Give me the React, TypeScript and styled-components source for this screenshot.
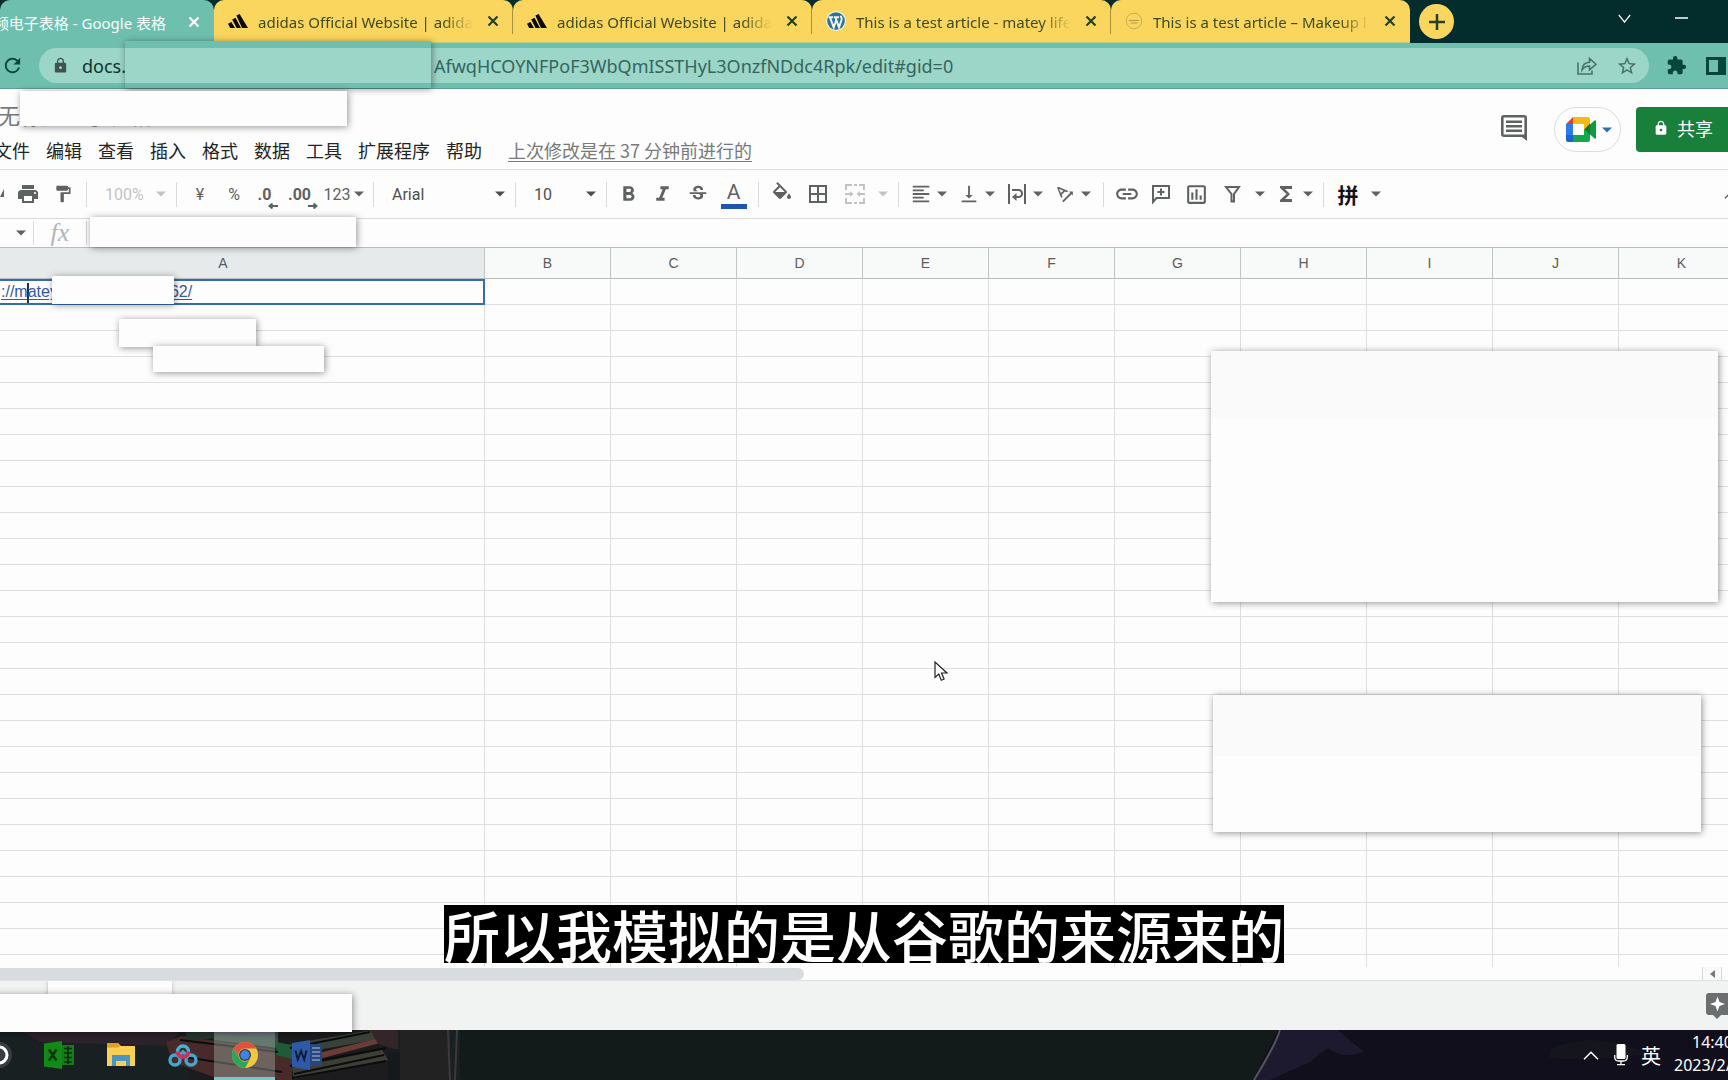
import React from "react";
import styled, { createGlobalStyle, css } from "styled-components";
import {
  MdPrint, MdFormatPaint, MdFormatBold, MdFormatItalic, MdStrikethroughS, MdBorderAll,
  MdFormatAlignLeft, MdVerticalAlignBottom, MdLink, MdRefresh, MdLock, MdExtension,
  MdStarBorder, MdOutlineInsertChart, MdFunctions, MdTextRotationAngleup,
} from "react-icons/md";

const UI = '"Noto Sans", "Noto Sans CJK SC", sans-serif';
const CJK = '"Noto Sans CJK SC", sans-serif';
const ICON = "#5f6262";

const Global = createGlobalStyle`
  * { box-sizing: border-box; }
  html, body, #root { height: 100%; }
  body { margin: 0; overflow: hidden; background: #fdfdfd; font-family: ${UI}; }
  button, select, input { font: inherit; color: inherit; margin: 0; }
`;

const Page = styled.div`
  position: relative;
  display: flex;
  flex-direction: column;
  height: 100vh;
  overflow: hidden;
  > * { flex-shrink: 0; }
`;

const Plain = css`
  display: flex;
  align-items: center;
  justify-content: center;
  padding: 0;
  border: 0;
  background: none;
  flex: none;
`;

const IconButton = styled.button<{ $w?: number }>`
  ${Plain}
  width: ${(p) => p.$w ?? 36}px;
  height: 100%;
`;

/* ---------- browser tabs ---------- */
const TabStrip = styled.div`
  display: flex;
  height: 43px;
  background: #032d2c;
`;
const Tab = styled.div<{ $active?: boolean }>`
  display: flex;
  align-items: center;
  width: ${(p) => (p.$active ? 214 : 299)}px;
  flex: none;
  gap: 10px;
  padding: 0 10px 0 ${(p) => (p.$active ? 0 : 14)}px;
  border-radius: 10px 10px 0 0;
  background: ${(p) => (p.$active ? "#6fbfaf" : "#fad65e")};
  color: ${(p) => (p.$active ? "#f4fffc" : "#3d4a1e")};
  font-size: 15px;
  line-height: 24px;
  border-bottom: ${(p) => (p.$active ? "0" : "1px solid #b9cf84")};
`;
const TabDivider = styled.span`
  width: 1px;
  height: 25px;
  margin-left: -15px;
  margin-right: 4px;
  background: #a8923f;
`;
const TabTitle = styled.span<{ $end?: boolean }>`
  display: flex;
  flex: 1;
  min-width: 0;
  padding-top: 2px;
  justify-content: ${(p) => (p.$end ? "flex-end" : "flex-start")};
  white-space: nowrap;
  overflow: hidden;
  ${(p) => p.$end && css`padding-right: 8px;`}
  ${(p) => !p.$end && css`mask-image: linear-gradient(90deg, #000 86%, transparent);`}
`;
const TabClose = styled.button<{ $light?: boolean }>`
  ${Plain}
  width: 20px;
  height: 20px;
  color: ${(p) => (p.$light ? "#fff" : "#24411f")};
`;
const NewTab = styled.button`
  ${Plain}
  width: 35px;
  height: 35px;
  margin: 4px 0 0 9px;
  border-radius: 50%;
  background: #fad65e;
  color: #24411f;
`;
const WindowControls = styled.div`
  display: flex;
  height: 36px;
  margin-left: auto;
  padding-right: 18px;
  color: #fff;
`;

/* ---------- address bar ---------- */
const AddressBar = styled.div`
  display: flex;
  align-items: center;
  height: 46px;
  background: #6fbfaf;
  border-bottom: 1px solid #5f9e93;
  color: #07463d;
`;
const Omnibox = styled.div`
  display: flex;
  align-items: center;
  flex: 1;
  height: 35px;
  margin-left: 15px;
  padding-right: 2px;
  border-radius: 18px;
  background: #9bd6c8;
  color: #47706a;
`;
const LockSlot = styled.span`
  display: flex;
  justify-content: center;
  width: 43px;
  color: #41524f;
`;
const Host = styled.span`
  width: 352px;
  font-size: 18px;
  line-height: 30px;
  color: #10332e;
`;
const UrlPath = styled.input`
  flex: 1;
  min-width: 0;
  padding: 0;
  border: 0;
  outline: 0;
  background: none;
  && { font-size: 18px; color: #35655c; }
`;

/* ---------- document header ---------- */
const DocHeader = styled.header`
  display: flex;
  justify-content: space-between;
  height: 81px;
  border-bottom: 1px solid #d9dbdb;
  font-family: ${CJK};
`;
const DocTitle = styled.h1`
  margin: 10px 0 3px -2px;
  font-size: 22px;
  line-height: 30px;
  font-weight: 400;
  color: #777a7a;
`;
const MenuBar = styled.nav`
  display: flex;
  align-items: center;
  gap: 16px;
  margin-left: -6px;
  height: 36px;
`;
const MenuItem = styled.button`
  ${Plain}
  && { font-size: 18px; line-height: 26px; color: #222525; }
`;
const LastEdit = styled.a`
  margin-left: 10px;
  font-size: 18px;
  line-height: 26px;
  color: #777a7a;
  text-decoration: underline;
  text-underline-offset: 3px;
`;
const DocActions = styled.div`
  display: flex;
  height: 45px;
  margin-top: 18px;
`;
const CommentButton = styled.button`
  ${Plain}
  width: 32px;
  padding-bottom: 4px;
`;
const MeetButton = styled.button`
  ${Plain}
  gap: 6px;
  width: 67px;
  margin: 0 15px 0 24px;
  padding-left: 2px;
  border: 1px solid #d9dcdf;
  border-radius: 23px;
`;
const MeetCaret = styled.span`
  display: flex;
  color: #2d70b8;
`;
const ShareButton = styled.button`
  ${Plain}
  gap: 8px;
  width: 92px;
  padding: 0 0 3px 17px;
  justify-content: flex-start;
  border-radius: 4px 0 0 4px;
  background: #18803a;
  && { color: #fff; font-size: 18px; }
`;

/* ---------- toolbar ---------- */
const Toolbar = styled.div`
  display: flex;
  align-items: center;
  height: 49px;
  border-bottom: 1px solid #d9dbdb;
  color: ${ICON};
  font-family: Roboto, ${CJK};
  font-size: 16px;
`;
const Tool = styled.button<{ $w?: number; $dim?: boolean }>`
  ${Plain}
  width: ${(p) => p.$w ?? 34}px;
  height: 34px;
  && { color: ${(p) => (p.$dim ? "#c2c4c4" : ICON)}; }
`;
const MenuTool = styled(Tool)<{ $wide?: boolean }>`
  width: ${(p) => (p.$wide ? 55 : 48)}px;
  justify-content: flex-start;
  gap: ${(p) => (p.$wide ? 12 : 5)}px;
  padding-left: ${(p) => (p.$wide ? 7 : 5)}px;
`;
const CollapseTool = styled(Tool)`
  width: 20px;
  margin-right: -14px;
`;
const Divider = styled.span<{ $h?: number }>`
  flex: none;
  width: 1px;
  height: ${(p) => p.$h ?? 25}px;
  margin: 0 6px;
  background: #d9dbdb;
`;
const SelectBox = styled.label<{ $w: number; $dim?: boolean }>`
  display: flex;
  align-items: center;
  flex: none;
  width: ${(p) => p.$w}px;
  padding: 0 4px 0 12px;
  color: ${(p) => (p.$dim ? "#c2c4c4" : "#4c4f4f")};
  select {
    flex: 1;
    min-width: 0;
    appearance: none;
    border: 0;
    padding: 0;
    background: none;
  }
`;
const Decimal = styled.span`
  display: flex;
  flex-direction: column;
  align-items: flex-end;
  padding: 8px 7px 0 0;
  font-weight: 700;
  line-height: 16px;
  svg { margin-right: -7px; }
`;
const InkedLetter = styled.span`
  width: 26px;
  padding-top: 1px;
  border-bottom: 5px solid #1f56ad;
  font-size: 21px;
  line-height: 24px;
`;
const ImeGlyph = styled.b`
  width: 22px;
  font-size: 21px;
  color: #111;
`;
const Spacer = styled.span`
  flex: 1;
`;

/* ---------- formula bar ---------- */
const FormulaBar = styled.div`
  display: flex;
  align-items: center;
  height: 29px;
  border-bottom: 1px solid #b9bdbd;
  color: ${ICON};
`;
const NameBoxTool = styled(Tool)`
  width: 27px;
  padding-left: 14px;
`;
const Fx = styled.label`
  width: 40px;
  text-align: center;
  font: italic 26px/28px "Liberation Serif", serif;
  color: #b4b6b6;
`;
const FormulaInput = styled.input`
  flex: 1;
  height: 26px;
  border: 0;
  outline: 0;
  background: none;
`;

/* ---------- sheet ---------- */
const SheetArea = styled.main`
  flex: 1 1 0;
  min-height: 0;
  overflow: hidden;
  font-family: "Liberation Sans", sans-serif;
`;
const Sheet = styled.table`
  width: 1745px;
  table-layout: fixed;
  border-collapse: separate;
  border-spacing: 0;
`;
const HeadCell = styled.th<{ $on?: boolean }>`
  height: 31px;
  padding: 0 ${(p) => (p.$on ? 38 : 0)}px 0 0;
  border-right: 1px solid #c0c4c4;
  border-bottom: 1px solid #b9bdbd;
  background: ${(p) => (p.$on ? "#e6eaea" : "#f8faf9")};
  font-size: 14px;
  font-weight: 400;
  color: #5a5d5d;
`;
const Cell = styled.td<{ $on?: boolean }>`
  height: 26px;
  padding: 0;
  border-right: 1px solid #dcdfdf;
  border-bottom: 1px solid #dcdfdf;
  ${(p) => p.$on && css`
    border: 2px solid #356cb0;
    border-left: 0;
  `}
`;
const CellLinks = styled.div`
  display: flex;
  gap: 112px;
  align-items: center;
  height: 22px;
  padding-left: 1px;
  font-size: 16px;
  line-height: 22px;
  color: #35599f;
  a { color: inherit; text-underline-offset: 2px; }
`;
const TextCursor = styled.span`
  display: inline-block;
  width: 2px;
  height: 20px;
  margin: 0 -1px;
  vertical-align: middle;
  background: #1c2f55;
`;

/* ---------- bottom of the sheet ---------- */
const ScrollRow = styled.div`
  display: flex;
  justify-content: space-between;
  height: 14px;
  border-bottom: 1px solid #dfe2e2;
`;
const ScrollThumb = styled.div`
  width: 46.5%;
  height: 12px;
  margin-top: 1px;
  border-radius: 0 6px 6px 0;
  background: #d8dcdf;
`;
const ScrollStep = styled.button`
  ${Plain}
  width: 20px;
  margin-right: 6px;
  border: solid #d9dbdb;
  border-width: 0 1px;
  background: #f8f9f9;
`;
const SheetTabs = styled.footer`
  display: flex;
  align-items: flex-start;
  justify-content: space-between;
  height: 49px;
  background: #f1f3f3;
  overflow: hidden;
`;
const SheetTab = styled.button`
  width: 124px;
  height: 49px;
  margin-left: 48px;
  border: 0;
  background: #fdfdfd;
  box-shadow: 0 0 4px rgba(0, 0, 0, 0.25);
`;
const ExploreButton = styled.button`
  ${Plain}
  margin: 12px -6px 0 0;
`;

/* ---------- taskbar ---------- */
const Taskbar = styled.div`
  position: relative;
  display: flex;
  justify-content: space-between;
  height: 50px;
  background: #141a19;
  color: #fff;
`;
const Wallpaper = styled.svg`
  position: absolute;
  inset: 0;
  width: 100%;
  height: 100%;
`;
const Apps = styled.div`
  position: relative;
  display: flex;
  margin-left: -34px;
`;
const AppButton = styled.button<{ $active?: boolean }>`
  ${Plain}
  width: 61px;
  height: 50px;
  margin-right: 1px;
  ${(p) => p.$active && css`
    background: rgba(170, 190, 180, 0.38);
    box-shadow: inset 0 -3px #7cc5cb;
  `}
`;
const Tray = styled.div`
  position: relative;
  display: flex;
  align-items: center;
  gap: 9px;
`;
const Lang = styled.button`
  ${Plain}
  margin-left: 4px;
  && { font-size: 20px; }
`;
const Clock = styled.time`
  width: 54px;
  margin-left: 4px;
  padding-bottom: 2px;
  overflow: hidden;
  font-size: 16px;
  line-height: 23px;
  white-space: nowrap;
  span { display: block; }
  span:first-child { padding-left: 18px; }
`;

/* ---------- things lying over the page ---------- */
const Cover = styled.div<{ $x: number; $y: number; $w: number; $h: number; $tone?: string }>`
  position: absolute;
  left: ${(p) => p.$x}px;
  top: ${(p) => p.$y}px;
  width: ${(p) => p.$w}px;
  height: ${(p) => p.$h}px;
  background: ${(p) => p.$tone ?? "#fdfdfd"};
  box-shadow: 1px 1px 7px rgba(0, 0, 0, 0.42);
`;
const Subtitle = styled.p`
  position: absolute;
  bottom: 117px;
  left: 50%;
  transform: translateX(-50%);
  margin: 0;
  background: #000;
  color: #fff;
  font: 500 56px/58px ${CJK};
  white-space: nowrap;
`;
const Pointer = styled.svg`
  position: absolute;
  left: 934px;
  top: 661px;
`;

/* ---------- drawings ---------- */
const CaretSvg = styled.svg`
  flex: none;
`;
const Caret = () => (
  <CaretSvg width="10" height="6" viewBox="0 0 10 6"><path d="M0 .5h10L5 5.5z" fill="currentColor" /></CaretSvg>
);
const Cross = () => (
  <svg width="12" height="12" viewBox="0 0 12 12"><path d="M1.5 1.5l9 9M10.5 1.5l-9 9" stroke="currentColor" strokeWidth="2.2" /></svg>
);
const Adidas = () => (
  <svg width="20" height="14" viewBox="0 0 20 14"><path d="M8.4 1.6L11.6 0 20 14h-6zM4.2 5.4l3.3-1.7L13 14H8.6zM0 9.8l3.4-1.7L7 14H2.2z" fill="#0a0a05" /></svg>
);
const WordPress = () => (
  <svg width="20" height="20" viewBox="0 0 20 20">
    <circle cx="10" cy="10" r="10" fill="#e9f1ee" /><circle cx="10" cy="10" r="8.8" fill="#2d7597" />
    <path d="M2.6 6.2h4.6M8 6.2h5M4 6.4l3.7 10 2.8-8M9.4 6.4l3.6 10 2.6-7.6c.5-1.8-.6-2.6-1-4" fill="none" stroke="#f4f8f5" strokeWidth="1.9" />
  </svg>
);
const Makeup = () => (
  <svg width="18" height="18" viewBox="0 0 18 18"><circle cx="9" cy="9" r="7.8" fill="none" stroke="#c9b055" /><path d="M4 8.5h10M5.5 11h7" stroke="#b39c48" strokeWidth="1.2" /></svg>
);
const ShareArrow = () => (
  <svg width="20" height="20" viewBox="0 0 20 20" fill="none" stroke="currentColor" strokeWidth="1.5"><path d="M1 6.5V18h14v-3.5M5 14c.3-5 3-7.5 7.5-7.7V2.500L19 8.300l-6.500 5.500V10C9 10 6.800 11.300 5 14z" /></svg>
);
const SidePanel = () => (
  <svg width="20" height="18" viewBox="0 0 20 18"><path d="M0 0h20v18H0zM3 3v12h9V3z" fillRule="evenodd" fill="currentColor" /></svg>
);
const CommentIcon = () => (
  <svg width="26" height="26" viewBox="0 0 26 26"><path d="M3 0h20q3 0 3 3v23l-5-4H3q-3 0-3-3V3q0-3 3-3zm-.4 2.500v17h20.800v-17zM5 5.500h16V8H5zM5 10h16v2.500H5zM5 14.500h16V17H5z" fillRule="evenodd" fill={ICON} /></svg>
);
const Meet = () => (
  <svg width="30" height="25" viewBox="0 0 30 25">
    <path d="M7 0v7H0z" fill="#e23f33" /><path d="M7 0h15q2 0 2 2v5.500l-6 5V7H7z" fill="#f7b916" />
    <path d="M0 7h7v11H0z" fill="#2a7de8" /><path d="M0 18h7v7H2q-2 0-2-2z" fill="#1a63d0" />
    <path d="M7 18h11v-5.500l6 5V23q0 2-2 2H7z" fill="#12a94c" /><path d="M18 12.500l6-6V18z" fill="#0d7a33" /><path d="M24 7.500L28.500 3.500q1.500-.8 1.500 1v16q0 1.800-1.500 1L24 17.600z" fill="#12993f" />
  </svg>
);
const Arrow = ({ right }: { right?: boolean }) => (
  <svg width="10" height="6" viewBox="0 0 10 6"><path d={right ? "M0 3h8M5.500 .5L8.500 3 5.500 5.500" : "M10 3H2M4.500 .5L1.500 3l3 2.500"} fill="none" stroke="currentColor" strokeWidth="2" /></svg>
);
const Bucket = () => (
  <svg width="24" height="24" viewBox="0 0 24 24"><path d="M16.560 8.940L7.620 0 6.210 1.410l2.380 2.380-5.150 5.150c-.59.59-.59 1.540 0 2.120l5.500 5.500c.29.29.68.44 1.060.44s.77-.15 1.060-.44l5.500-5.500c.59-.58.59-1.530 0-2.120zM5.210 10L10 5.210 14.790 10H5.210zM19 11.500s-2 2.170-2 3.500c0 1.100.9 2 2 2s2-.9 2-2c0-1.330-2-3.500-2-3.500z" fill="currentColor" /></svg>
);
const Merge = () => (
  <svg width="22" height="20" viewBox="0 0 22 20" fill="none" stroke="currentColor" strokeWidth="2"><path d="M2 6V1h6M10 1h3M15 1h5v5M20 14v5h-5M13 19h-3M8 19H2v-5M1 10h6M21 10h-6" /><path d="M6 7l3.500 3L6 13zM16 7l-3.500 3 3.500 3z" fill="currentColor" stroke="none" /></svg>
);
const Wrap = () => (
  <svg width="22" height="20" viewBox="0 0 22 20" fill="none" stroke="currentColor" strokeWidth="2"><path d="M3 0v20M19 0v20M6 6h6.500a3.500 3.500 0 0 1 0 7H9" /><path d="M10.500 9v8L6 13z" fill="currentColor" stroke="none" /></svg>
);
const AddComment = () => (
  <svg width="20" height="20" viewBox="0 0 20 20" fill="none" stroke="currentColor" strokeWidth="2"><path d="M2 18V2h16v12H5.500zM10 4.500v7M6.500 8h7" /></svg>
);
const Funnel = () => (
  <svg width="22" height="18" viewBox="0 0 22 18" fill="none" stroke="currentColor" strokeWidth="2"><path d="M5 2h13l-5 7v7.500h-2.500V9z" /></svg>
);
const Chevron = ({ up, w = 16 }: { up?: boolean; w?: number }) => (
  <CaretSvg width={w} height="9" viewBox="0 0 16 9" preserveAspectRatio="none"><path d={up ? "M1 8.200l7-7 7 7" : "M1 1l7 7 7-7"} fill="none" stroke="currentColor" strokeWidth="1.500" /></CaretSvg>
);
const Explore = () => (
  <svg width="28" height="27" viewBox="0 0 28 27"><path d="M3 0h22q3 0 3 3v16q0 3-3 3H15l-4 4-4-4H3q-3 0-3-3V3q0-3 3-3z" fill="#6c6f6f" /><path d="M11.500 3.500l2 5.500 5.500 2-5.500 2-2 5.500-2-5.500L4 11l5.500-2z" fill="#fff" /></svg>
);
const Excel = () => (
  <svg width="30" height="28" viewBox="0 0 30 28"><path d="M18 4h12v20H18z" fill="#157d18" /><path d="M20 7.500h8M20 12h8M20 16.500h8M20 21h8M24 5v18" stroke="#0c2b12" strokeWidth="1.500" /><path d="M0 2.500L18 0v28L0 25.500z" fill="#138a16" /><path d="M5 8.500l7.500 11M12.500 8.500L5 19.500" stroke="#0b330e" strokeWidth="2.400" /></svg>
);
const Folder = () => (
  <svg width="28" height="24" viewBox="0 0 28 24"><path d="M0 0h11l3 3h14v20H0z" fill="#f9cf55" /><path d="M0 0h11l2 3-2 1.500H0z" fill="#dda022" /><path d="M5 12h18v11h-4v-5H9v5H5z" fill="#4a94bd" /></svg>
);
const Cloud = () => (
  <svg width="30" height="24" viewBox="0 0 30 24" fill="none" strokeWidth="3.400"><path d="M9 14L15 9l6 5" stroke="#3fa4cb" /><circle cx="7" cy="17" r="5" stroke="#3fa9cf" /><circle cx="23" cy="17" r="5" stroke="#3fa9cf" /><circle cx="15" cy="8.500" r="5.500" stroke="#42b4d8" /><path d="M9.500 8.500a5.500 5.500 0 0 0 11 0" stroke="#d52c55" strokeWidth="4" /></svg>
);
const ChromeLogo = () => (
  <svg width="26" height="26" viewBox="0 0 26 26"><circle cx="13" cy="13" r="13" fill="#f3c83d" /><path d="M1.700 6.500A13 13 0 0 1 24.300 6.500H13A6.500 6.500 0 0 0 7.400 16.300z" fill="#de5145" /><path d="M1.700 6.500l5.700 9.800a6.500 6.500 0 0 0 11.200 0L13 26A13 13 0 0 1 1.700 6.500z" fill="#2fa55b" /><circle cx="13" cy="13" r="6" fill="#3a3c38" /><circle cx="13" cy="13" r="4.700" fill="#3f82ea" /></svg>
);
const Word = () => (
  <svg width="30" height="30" viewBox="0 0 30 30"><path d="M18 4h12v22H18z" fill="#29457e" /><path d="M20 8h8M20 12h8M20 16h8M20 20h8" stroke="#8298c0" strokeWidth="1.500" /><path d="M0 3L18 0v30L0 27z" fill="#2d59a8" /><path d="M3.500 10.500l2.300 9L9 11l3.200 8.500 2.300-9" fill="none" stroke="#101c38" strokeWidth="2" /></svg>
);
const Mic = () => (
  <svg width="14" height="22" viewBox="0 0 14 22"><rect x="2.500" y="0" width="9" height="15" rx="1.500" fill="#fff" /><path d="M.7 11v2q0 4 4 4h4.600q4 0 4-4v-2M7 17v3.500M3 20.700h8" fill="none" stroke="#fff" strokeWidth="1.300" /></svg>
);
const Desk = () => (
  <Wallpaper viewBox="0 0 1728 50" preserveAspectRatio="none" aria-hidden="true">
    <path d="M0 0h480v50H0z" fill="#182022" />
    <path d="M20 0h160L168 16 40 12z" fill="#2c2229" />
    <path d="M180 0h218v50H190z" fill="#1c1b1d" />
    <path d="M166 12l16-6 96 14 14 4v26h-70l-50-18z" fill="#472a29" />
    <path d="M186 0h28v8l-28 4z" fill="#25352d" />
    <path d="M214 4h64v14l-64-8z" fill="#3b5145" />
    <path d="M214 0h64v8l-64-4z" fill="#41435a" />
    <path d="M276 12l16 3v14l-16-4z" fill="#1f5b36" />
    <path d="M290 14l82-14h10l4 8-92 16z" fill="#3a4138" />
    <path d="M294 29l82-20 4 4-84 22z" fill="#6a3d36" />
    <path d="M292 38l90-18 6 10-94 19z" fill="#3d3f37" />
    <path d="M178 26l104 16M290 36l96-18M292 48l94-17M180 10l98 12M290 18l80-16M294 44l90-19" stroke="#0b0d0d" strokeWidth="2" fill="none" />
    <path d="M370 0h28v20l-20-6z" fill="#33262a" />
    <path d="M388 22h12v28h-12z" fill="#141a1b" />
    <path d="M400 0h50v50h-50z" fill="#222223" />
    <path d="M448 0l2 50M457 0l-2 50" stroke="#3f383b" strokeWidth="2" />
    <path d="M460 0h812l-18 50H460z" fill="#131b1a" />
    <path d="M1278 0h450v50h-475z" fill="#110f1b" />
    <path d="M1282 0h56l26 22q-20 8-36-4l-18 14-40 18h-15z" fill="#1d192e" />
    <path d="M1280 0q-4 14-26 50" stroke="#55535f" strokeWidth="2" fill="none" />
    <path d="M1550 20q40-22 100 4-60 8-100 4z" fill="#15151d" />
  </Wallpaper>
);

const COLUMNS = ["A", "B", "C", "D", "E", "F", "G", "H", "I", "J", "K"];
const MENUS = ["文件", "编辑", "查看", "插入", "格式", "数据", "工具", "扩展程序", "帮助"];
const TABS = [
  { icon: <Adidas />, title: "adidas Official Website | adidas" },
  { icon: <Adidas />, title: "adidas Official Website | adidas" },
  { icon: <WordPress />, title: "This is a test article - matey life" },
  { icon: <Makeup />, title: "This is a test article – Makeup l" },
];

export default function App() {
  return (
    <Page>
      <Global />
      <TabStrip>
        <Tab $active>
          <TabTitle $end>频电子表格 - Google 表格</TabTitle>
          <TabClose $light aria-label="关闭"><Cross /></TabClose>
        </Tab>
        {TABS.map((tab, i) => (
          <Tab key={i}>
            {i > 0 && <TabDivider />}
            {tab.icon}
            <TabTitle>{tab.title}</TabTitle>
            <TabClose aria-label="关闭"><Cross /></TabClose>
          </Tab>
        ))}
        <NewTab aria-label="新标签页">
          <svg width="16" height="16" viewBox="0 0 16 16"><path d="M8 0v16M0 8h16" stroke="currentColor" strokeWidth="2.5" /></svg>
        </NewTab>
        <WindowControls>
          <IconButton $w={57} aria-label="搜索标签页"><Chevron w={13} /></IconButton>
          <IconButton $w={57} aria-label="最小化"><svg width="13" height="2"><path d="M0 1h13" stroke="#fff" strokeWidth="1.5" /></svg></IconButton>
        </WindowControls>
      </TabStrip>

      <AddressBar>
        <IconButton $w={24} aria-label="重新加载"><MdRefresh size={23} /></IconButton>
        <Omnibox>
          <LockSlot><MdLock size={17} /></LockSlot>
          <Host>docs.</Host>
          <UrlPath aria-label="网址" defaultValue="AfwqHCOYNFPoF3WbQmISSTHyL3OnzfNDdc4Rpk/edit#gid=0" />
          <IconButton $w={40} aria-label="分享"><ShareArrow /></IconButton>
          <IconButton $w={40} aria-label="收藏"><MdStarBorder size={22} /></IconButton>
        </Omnibox>
        <IconButton $w={54} aria-label="扩展程序"><MdExtension size={21} /></IconButton>
        <IconButton $w={25} aria-label="侧边栏"><SidePanel /></IconButton>
      </AddressBar>

      <DocHeader>
        <div>
          <DocTitle>无标题电子表格</DocTitle>
          <MenuBar>
            {MENUS.map((m) => <MenuItem key={m}>{m}</MenuItem>)}
            <LastEdit href="#history">上次修改是在 37 分钟前进行的</LastEdit>
          </MenuBar>
        </div>
        <DocActions>
          <CommentButton aria-label="评论"><CommentIcon /></CommentButton>
          <MeetButton aria-label="视频通话"><Meet /><MeetCaret><Caret /></MeetCaret></MeetButton>
          <ShareButton><MdLock size={16} />共享</ShareButton>
        </DocActions>
      </DocHeader>

      <Toolbar>
        <Tool $w={10} aria-label="重做"><svg width="10" height="12" viewBox="0 0 10 12"><path d="M4 1v8H0z" fill="currentColor" /></svg></Tool>
        <Tool $w={36} aria-label="打印"><MdPrint size={24} /></Tool>
        <Tool aria-label="格式刷"><MdFormatPaint size={20} /></Tool>
        <Divider />
        <SelectBox $w={77} $dim><select aria-label="缩放"><option>100%</option></select><Caret /></SelectBox>
        <Divider />
        <Tool>¥</Tool>
        <Tool>%</Tool>
        <Tool aria-label="减少小数位数"><Decimal>.0<Arrow /></Decimal></Tool>
        <Tool $w={36} aria-label="增加小数位数"><Decimal>.00<Arrow right /></Decimal></Tool>
        <Tool $w={46}>123&nbsp;<Caret /></Tool>
        <Divider />
        <SelectBox $w={129}><select aria-label="字体"><option>Arial</option></select><Caret /></SelectBox>
        <Divider />
        <SelectBox $w={78}><select aria-label="字号"><option>10</option></select><Caret /></SelectBox>
        <Divider />
        <Tool $w={31} aria-label="粗体"><MdFormatBold size={25} /></Tool>
        <Tool $w={37} aria-label="斜体"><MdFormatItalic size={25} /></Tool>
        <Tool aria-label="删除线"><MdStrikethroughS size={22} /></Tool>
        <Tool $w={37} aria-label="文字颜色"><InkedLetter>A</InkedLetter></Tool>
        <Divider />
        <Tool aria-label="填充颜色"><Bucket /></Tool>
        <Tool $w={38} aria-label="边框"><MdBorderAll size={24} /></Tool>
        <MenuTool $wide $dim aria-label="合并"><Merge /><Caret /></MenuTool>
        <Divider />
        <MenuTool aria-label="水平对齐"><MdFormatAlignLeft size={22} /><Caret /></MenuTool>
        <MenuTool aria-label="垂直对齐"><MdVerticalAlignBottom size={22} /><Caret /></MenuTool>
        <MenuTool aria-label="换行"><Wrap /><Caret /></MenuTool>
        <MenuTool aria-label="旋转"><MdTextRotationAngleup size={22} /><Caret /></MenuTool>
        <Divider />
        <Tool aria-label="插入链接"><MdLink size={26} /></Tool>
        <Tool aria-label="插入评论"><AddComment /></Tool>
        <Tool $w={36} aria-label="插入图表"><MdOutlineInsertChart size={25} /></Tool>
        <MenuTool $wide aria-label="过滤"><Funnel /><Caret /></MenuTool>
        <MenuTool aria-label="函数"><MdFunctions size={24} /><Caret /></MenuTool>
        <Divider />
        <MenuTool $wide><ImeGlyph>拼</ImeGlyph><Caret /></MenuTool>
        <Spacer />
        <CollapseTool aria-label="收起"><Chevron up /></CollapseTool>
      </Toolbar>

      <FormulaBar>
        <NameBoxTool aria-label="名称框"><Caret /></NameBoxTool>
        <Divider $h={24} />
        <Fx htmlFor="formula">fx</Fx>
        <Divider $h={24} />
        <FormulaInput id="formula" />
      </FormulaBar>

      <SheetArea>
        <Sheet>
          <colgroup>
            {COLUMNS.map((c) => <col key={c} width={c === "A" ? 485 : 126} />)}
          </colgroup>
          <thead>
            <tr>{COLUMNS.map((c) => <HeadCell key={c} $on={c === "A"}>{c}</HeadCell>)}</tr>
          </thead>
          <tbody>
            {Array.from({ length: 27 }, (_, r) => (
              <tr key={r}>
                {COLUMNS.map((c) => (
                  <Cell key={c} $on={r === 0 && c === "A"}>
                    {r === 0 && c === "A" && (
                      <CellLinks>
                        <a href="#cell">://m<TextCursor />atey</a>
                        <a href="#cell">62/</a>
                      </CellLinks>
                    )}
                  </Cell>
                ))}
              </tr>
            ))}
          </tbody>
        </Sheet>
      </SheetArea>

      <ScrollRow>
        <ScrollThumb />
        <ScrollStep aria-label="向左滚动"><svg width="5" height="8" viewBox="0 0 5 8"><path d="M5 0v8L0 4z" fill="#777" /></svg></ScrollStep>
      </ScrollRow>
      <SheetTabs>
        <SheetTab aria-label="工作表1" />
        <ExploreButton aria-label="探索"><Explore /></ExploreButton>
      </SheetTabs>

      <Taskbar>
        <Desk />
        <Apps>
          <AppButton aria-label="搜索"><svg width="30" height="30" viewBox="0 0 30 30"><circle cx="17" cy="15" r="13" fill="#55585a" opacity=".5" /><circle cx="17" cy="15" r="8" fill="none" stroke="#fff" strokeWidth="3" /></svg></AppButton>
          <AppButton aria-label="Excel"><Excel /></AppButton>
          <AppButton aria-label="文件资源管理器"><Folder /></AppButton>
          <AppButton aria-label="网盘"><Cloud /></AppButton>
          <AppButton $active aria-label="Chrome"><ChromeLogo /></AppButton>
          <AppButton aria-label="Word"><Word /></AppButton>
        </Apps>
        <Tray>
          <IconButton $w={28} aria-label="显示隐藏的图标"><Chevron up /></IconButton>
          <IconButton $w={14} aria-label="麦克风"><Mic /></IconButton>
          <Lang>英</Lang>
          <Clock><span>14:40</span><span>2023/2/</span></Clock>
        </Tray>
      </Taskbar>

      <Cover $x={125} $y={41} $w={306} $h={47} $tone="linear-gradient(#6fbfaf 0 7px, #9bd6c8 7px 42px, #6fbfaf 42px)" />
      <Cover $x={20} $y={91} $w={327} $h={35} />
      <Cover $x={90} $y={217} $w={266} $h={30} />
      <Cover $x={52} $y={276} $w={122} $h={28} />
      <Cover $x={119} $y={319} $w={137} $h={28} />
      <Cover $x={153} $y={346} $w={171} $h={26} />
      <Cover $x={1211} $y={351} $w={507} $h={251} $tone="linear-gradient(#fafafa 0 67px, #fdfdfd 67px)" />
      <Cover $x={1213} $y={695} $w={488} $h={137} $tone="linear-gradient(#fafafa 0 61px, #fdfdfd 61px)" />
      <Cover $x={-8} $y={994} $w={360} $h={38} />
      <Pointer width="14" height="21" viewBox="0 0 14 21"><path d="M1 1v15.500l3.800-3.500 2.500 6.200 2.800-1.200-2.600-6H13z" fill="#fff" stroke="#222" strokeWidth="1.2" /></Pointer>
      <Subtitle>所以我模拟的是从谷歌的来源来的</Subtitle>
    </Page>
  );
}
